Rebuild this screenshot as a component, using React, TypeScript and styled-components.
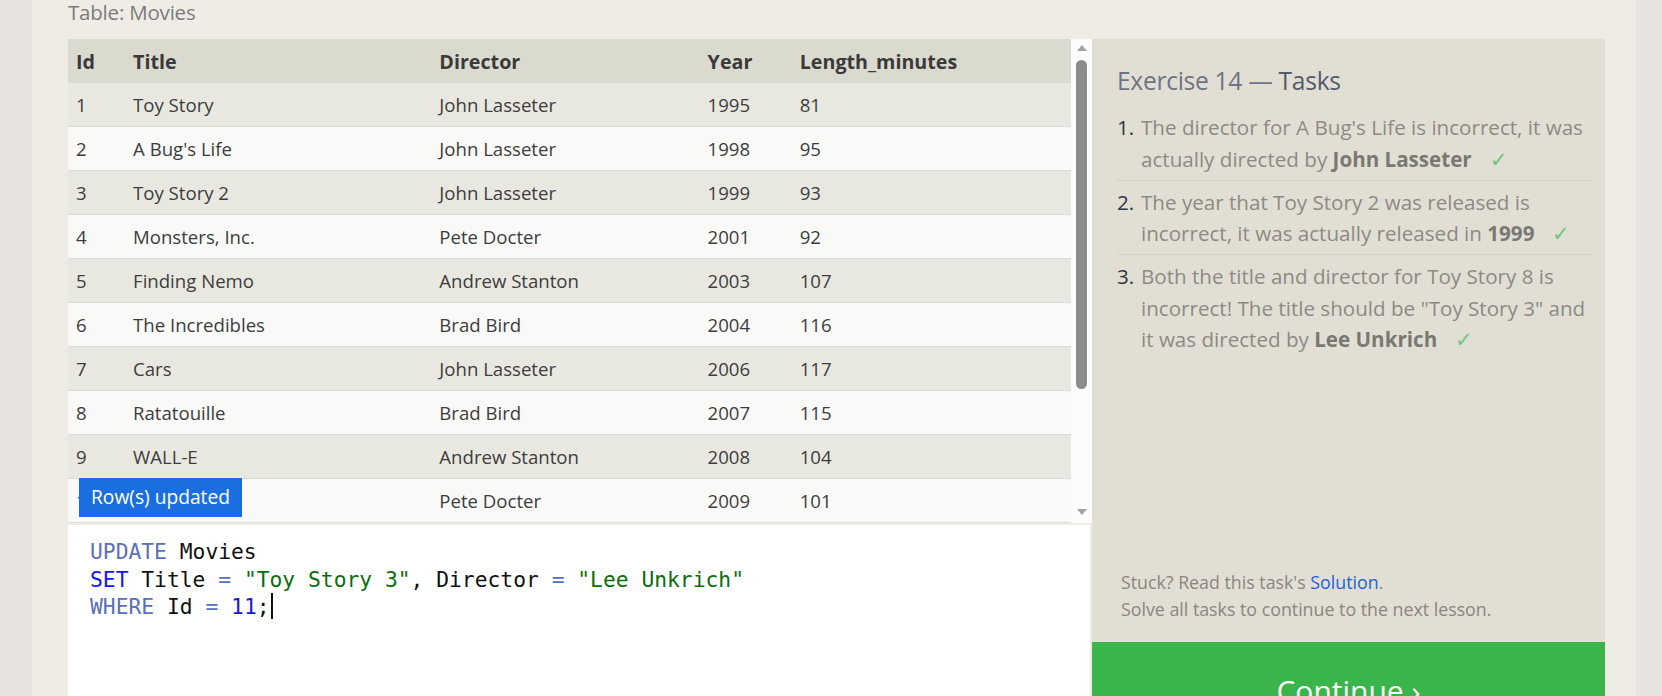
import React from "react";
import styled, { createGlobalStyle } from "styled-components";

const GlobalStyle = createGlobalStyle`
  html, body {
    margin: 0;
    padding: 0;
    background: #e7e4df;
  }
  body {
    font-family: "Open Sans", "Noto Sans", sans-serif;
    overflow: hidden;
  }
`;

const Page = styled.div`
  width: 1662px;
  height: 696px;
  display: flex;
  overflow: hidden;
`;

const Main = styled.main`
  margin-left: 32px;
  width: 1604px;
  height: 696px;
  background: #efece6;
  padding-left: 36px;
  box-sizing: border-box;
  display: flex;
  flex-direction: column;
`;

const TableLabel = styled.div`
  flex: none;
  height: 47px;
  margin-top: -8px;
  font-size: 20.5px;
  line-height: 40px;
  color: #7b7b7b;
  letter-spacing: -0.2px;
`;

const Workspace = styled.div`
  display: flex;
  flex: 1;
  min-height: 0;
`;

const LeftColumn = styled.div`
  width: 1024px;
  display: flex;
  flex-direction: column;
`;

const TableViewport = styled.div`
  position: relative;
  flex: none;
  height: 484px;
  display: flex;
  overflow: hidden;
`;

const TableScroll = styled.div`
  flex: 1;
  overflow: hidden;
`;

const MovieTable = styled.table`
  width: 100%;
  border-collapse: collapse;
  table-layout: fixed;
  color: #3d3d3d;
  font-size: 18.6px;
`;

const HeadCell = styled.th`
  height: 44px;
  padding: 0 0 0 8px;
  background: #dadacf;
  text-align: left;
  font-weight: 700;
  font-size: 19.7px;
  color: #3a3a3a;
`;

const Row = styled.tr<{ $odd: boolean }>`
  background: ${(p) => (p.$odd ? "#e9e8e0" : "#f9f9f8")};
`;

const Cell = styled.td`
  height: 43px;
  padding: 0 0 0 8px;
  border-bottom: 1px solid #dedcd6;
  white-space: nowrap;
`;

const Scrollbar = styled.div`
  width: 21px;
  background: #fcfcfc;
  display: flex;
  flex-direction: column;
  align-items: center;
`;

const Arrow = styled.div<{ $down?: boolean }>`
  width: 0;
  height: 0;
  border-left: 5px solid transparent;
  border-right: 5px solid transparent;
  ${(p) =>
    p.$down
      ? "border-top: 6px solid #a3a3a3; margin-top: auto; margin-bottom: 8px;"
      : "border-bottom: 6px solid #a3a3a3; margin-top: 6px;"}
`;

const Thumb = styled.div`
  width: 11px;
  height: 329px;
  margin-top: 9px;
  border-radius: 6px;
  background: #8b8b8b;
`;

const Toast = styled.div`
  position: absolute;
  left: 11px;
  bottom: 6px;
  padding: 0 12px;
  height: 39px;
  line-height: 38px;
  background: #1b6edf;
  color: #ffffff;
  font-size: 19.2px;
`;

const Editor = styled.div`
  flex: 1;
  margin-top: 2px;
  margin-right: 2px;
  background: #ffffff;
  padding: 13px 0 0 22px;
  font-family: "DejaVu Sans Mono", "Liberation Mono", monospace;
  font-size: 21.3px;
  line-height: 27.5px;
  color: #111111;
`;

const CodeLine = styled.div`
  white-space: pre;
`;

const Tok = styled.span<{ $kind: "kw" | "set" | "str" | "num" | "op" }>`
  color: ${(p) =>
    ({ kw: "#5a70b8", set: "#1515f0", str: "#0a6e0a", num: "#1a1ad2", op: "#5a70b8" })[p.$kind]};
`;

const Caret = styled.span`
  display: inline-block;
  width: 2px;
  height: 26px;
  margin-left: 1px;
  vertical-align: -5px;
  background: #111111;
`;

const TaskPanel = styled.aside`
  width: 513px;
  background: #e1dfd4;
  display: flex;
  flex-direction: column;
`;

const PanelBody = styled.div`
  flex: 1;
  padding: 26px 13px 0 25px;
  display: flex;
  flex-direction: column;
`;

const PanelTitle = styled.h2`
  margin: 0 0 10px;
  font-size: 24.6px;
  line-height: 31px;
  font-weight: 400;
  color: #6e7384;
  letter-spacing: -0.3px;
`;

const TitleStrong = styled.span`
  color: #555b6c;
`;

const TaskList = styled.ol`
  margin: 0;
  padding: 0;
  list-style: none;
`;

const TaskItem = styled.li<{ $last?: boolean }>`
  display: flex;
  padding: 6px 0 4.5px;
  border-bottom: ${(p) => (p.$last ? "none" : "1px solid #d4d2c7")};
  font-size: 20.6px;
  line-height: 31.5px;
  color: #8d8a84;
`;

const TaskNumber = styled.span`
  width: 24px;
  flex: none;
  color: #2f3342;
`;

const TaskText = styled.span`
  flex: 1;
`;

const Strong = styled.b`
  color: #7a7873;
`;

const Check = styled.span`
  margin-left: 18px;
  color: #70c57d;
`;

const Footer = styled.div`
  margin-top: auto;
  padding: 0 0 19px 4px;
  font-size: 17.8px;
  line-height: 27px;
  color: #8b8580;
`;

const SolutionLink = styled.a`
  color: #1d5fd8;
  text-decoration: none;
`;

const ContinueBar = styled.div`
  flex: none;
  height: 54px;
  box-sizing: border-box;
  padding-top: 29px;
  overflow: hidden;
  background: #3ab54b;
  color: #ffffff;
  font-size: 30px;
  line-height: 40px;
  text-align: center;
  cursor: pointer;
`;

const columns = [
  { key: "id", label: "Id", width: 57 },
  { key: "title", label: "Title", width: 306 },
  { key: "director", label: "Director", width: 268 },
  { key: "year", label: "Year", width: 92 },
  { key: "length", label: "Length_minutes", width: 279 },
];

const movies = [
  [1, "Toy Story", "John Lasseter", 1995, 81],
  [2, "A Bug's Life", "John Lasseter", 1998, 95],
  [3, "Toy Story 2", "John Lasseter", 1999, 93],
  [4, "Monsters, Inc.", "Pete Docter", 2001, 92],
  [5, "Finding Nemo", "Andrew Stanton", 2003, 107],
  [6, "The Incredibles", "Brad Bird", 2004, 116],
  [7, "Cars", "John Lasseter", 2006, 117],
  [8, "Ratatouille", "Brad Bird", 2007, 115],
  [9, "WALL-E", "Andrew Stanton", 2008, 104],
  [10, "Up", "Pete Docter", 2009, 101],
];

export default function App() {
  return (
    <>
      <GlobalStyle />
      <Page>
        <Main>
          <TableLabel>Table: Movies</TableLabel>
          <Workspace>
            <LeftColumn>
              <TableViewport>
                <TableScroll>
                  <MovieTable>
                    <colgroup>
                      {columns.map((c) => (
                        <col key={c.key} style={{ width: c.width }} />
                      ))}
                    </colgroup>
                    <thead>
                      <tr>
                        {columns.map((c) => (
                          <HeadCell key={c.key}>{c.label}</HeadCell>
                        ))}
                      </tr>
                    </thead>
                    <tbody>
                      {movies.map((m, i) => (
                        <Row key={m[0]} $odd={i % 2 === 0}>
                          {m.map((v, j) => (
                            <Cell key={j}>{v}</Cell>
                          ))}
                        </Row>
                      ))}
                    </tbody>
                  </MovieTable>
                </TableScroll>
                <Scrollbar>
                  <Arrow />
                  <Thumb />
                  <Arrow $down />
                </Scrollbar>
                <Toast>Row(s) updated</Toast>
              </TableViewport>
              <Editor>
                <CodeLine>
                  <Tok $kind="kw">UPDATE</Tok> Movies
                </CodeLine>
                <CodeLine>
                  <Tok $kind="set">SET</Tok> Title <Tok $kind="op">=</Tok> <Tok $kind="str">"Toy Story 3"</Tok>, Director{" "}
                  <Tok $kind="op">=</Tok> <Tok $kind="str">"Lee Unkrich"</Tok>
                </CodeLine>
                <CodeLine>
                  <Tok $kind="kw">WHERE</Tok> Id <Tok $kind="op">=</Tok> <Tok $kind="num">11</Tok>;
                  <Caret />
                </CodeLine>
              </Editor>
            </LeftColumn>
            <TaskPanel>
              <PanelBody>
                <PanelTitle>
                  Exercise 14 — <TitleStrong>Tasks</TitleStrong>
                </PanelTitle>
                <TaskList>
                  <TaskItem>
                    <TaskNumber>1.</TaskNumber>
                    <TaskText>
                      The director for A Bug's Life is incorrect, it was actually directed by{" "}
                      <Strong>John Lasseter</Strong>
                      <Check>✓</Check>
                    </TaskText>
                  </TaskItem>
                  <TaskItem>
                    <TaskNumber>2.</TaskNumber>
                    <TaskText>
                      The year that Toy Story 2 was released is incorrect, it was actually released in{" "}
                      <Strong>1999</Strong>
                      <Check>✓</Check>
                    </TaskText>
                  </TaskItem>
                  <TaskItem $last>
                    <TaskNumber>3.</TaskNumber>
                    <TaskText>
                      Both the title and director for Toy Story 8 is incorrect! The title should be "Toy Story 3" and
                      it was directed by <Strong>Lee Unkrich</Strong>
                      <Check>✓</Check>
                    </TaskText>
                  </TaskItem>
                </TaskList>
                <Footer>
                  Stuck? Read this task's <SolutionLink href="#">Solution</SolutionLink>.
                  <br />
                  Solve all tasks to continue to the next lesson.
                </Footer>
              </PanelBody>
              <ContinueBar>Continue ›</ContinueBar>
            </TaskPanel>
          </Workspace>
        </Main>
      </Page>
    </>
  );
}
